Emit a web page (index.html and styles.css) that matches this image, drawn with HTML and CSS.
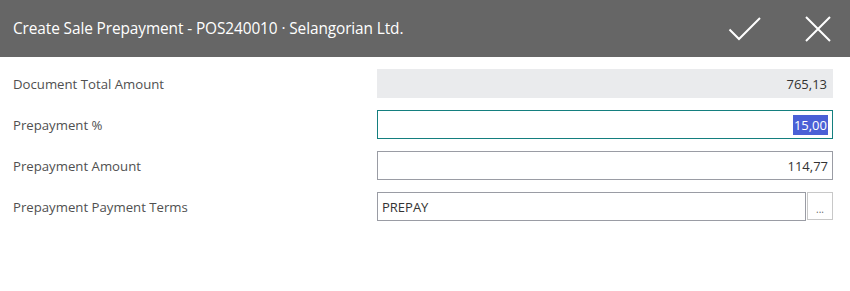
FILE: index.html
```html
<!DOCTYPE html>
<html lang="en">
<head>
<meta charset="utf-8">
<title>Create Sale Prepayment</title>
<link rel="stylesheet" href="styles.css">
</head>
<body>
<div class="dialog">
  <header class="titlebar">
    <h1 class="title">Create Sale Prepayment - POS240010 · Selangorian Ltd.</h1>
    <div class="actions">
      <button class="icon-btn" aria-label="OK">
        <svg width="34" height="26" viewBox="0 0 34 26"><path d="M1.5 13.5 L11 23 L32 2" fill="none" stroke="#fff" stroke-width="2"/></svg>
      </button>
      <button class="icon-btn" aria-label="Close">
        <svg width="26" height="26" viewBox="0 0 26 26"><path d="M1 1 L25 25 M25 1 L1 25" fill="none" stroke="#fff" stroke-width="2"/></svg>
      </button>
    </div>
  </header>
  <div class="form">
    <div class="row">
      <div class="label">Document Total Amount</div>
      <div class="field readonly num">765,13</div>
    </div>
    <div class="row">
      <div class="label">Prepayment %</div>
      <div class="field focused num"><span class="sel">15,00</span></div>
    </div>
    <div class="row">
      <div class="label">Prepayment Amount</div>
      <div class="field num">114,77</div>
    </div>
    <div class="row">
      <div class="label">Prepayment Payment Terms</div>
      <div class="field-group">
        <div class="field">PREPAY</div>
        <button class="lookup">...</button>
      </div>
    </div>
  </div>
</div>
</body>
</html>
```
FILE: styles.css
```css
* { box-sizing: border-box; }
html, body { margin: 0; padding: 0; background: #fff; }
body { font-family: "Open Sans", "Noto Sans", sans-serif; }
.dialog { width: 850px; }
.titlebar {
  height: 57px;
  background: #666666;
  display: flex;
  align-items: center;
  justify-content: space-between;
  padding: 0 19px 0 13px;
}
.title {
  margin: 0;
  font-size: 15.4px;
  font-weight: 400;
  color: #fff;
  letter-spacing: -0.1px;
  padding-bottom: 1px;
}
.actions { display: flex; align-items: center; gap: 43px; padding-top: 1px; }
.icon-btn {
  background: none; border: 0; padding: 0; margin: 0;
  display: flex; align-items: center; justify-content: center;
  cursor: pointer;
}
.icon-btn svg { display: block; }
.form {
  padding: 12px 17px 0 13px;
  display: flex;
  flex-direction: column;
  gap: 12px;
}
.row {
  display: flex;
  align-items: center;
  justify-content: space-between;
  height: 29px;
}
.label {
  font-size: 13.2px;
  color: #505050;
}
.field {
  width: 456px;
  height: 29px;
  border: 1px solid #9a9ca4;
  font-size: 13px;
  color: #333;
  display: flex;
  align-items: center;
  padding: 0 4px;
  background: #fff;
}
.field.num { justify-content: flex-end; }
.field.readonly { background: #eaebed; border-color: #eaebed; padding-right: 5px; }
.field.focused { border-color: #147f7f; }
.sel { background: #4a60d6; color: #fff; line-height: 20px; padding: 0 1px; }
.field-group { display: flex; gap: 1px; width: 456px; }
.field-group .field { width: 429px; height: 29px; }
.lookup {
  width: 26px;
  height: 28px;
  border: 1px solid #c8c8c8;
  background: #fff;
  font-size: 10px;
  color: #666;
  padding: 6px 0 0;
  margin: 0;
  font-family: inherit;
  align-self: flex-start;
}
```
